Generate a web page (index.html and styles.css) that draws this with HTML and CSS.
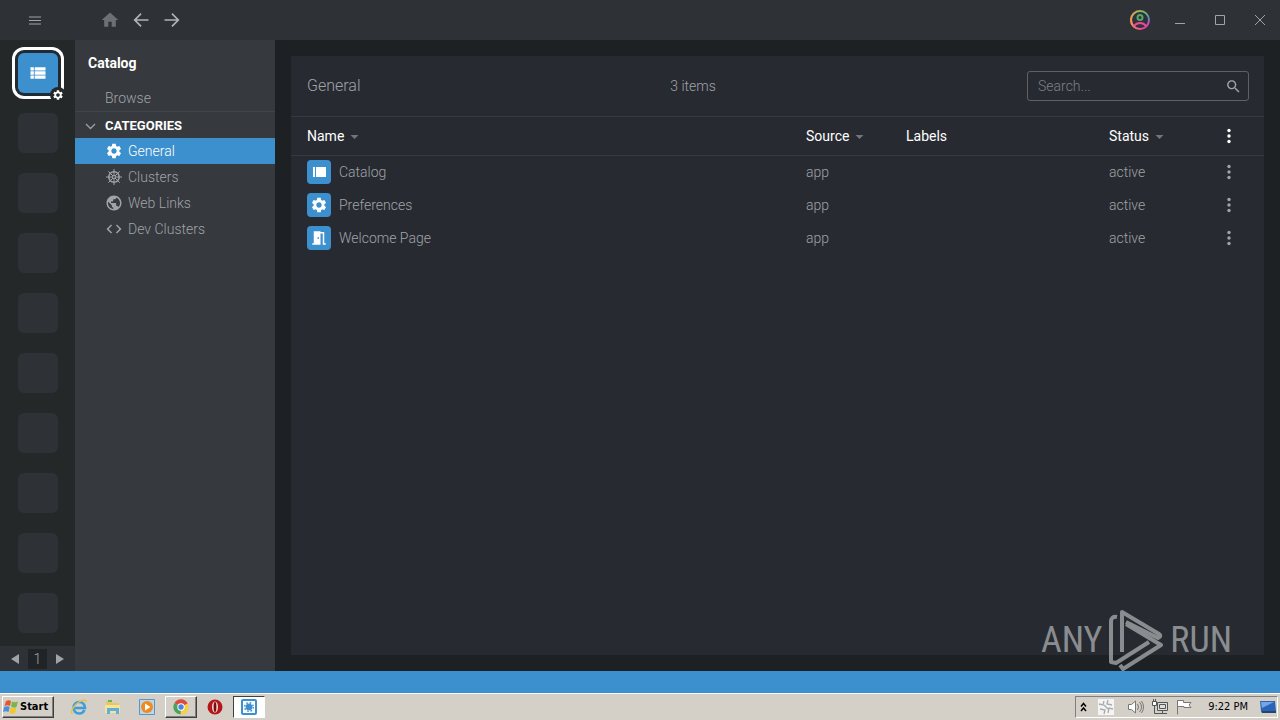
FILE: index.html
```
<!DOCTYPE html>
<html lang="en">
<head>
    <meta charset="UTF-8">
    <title>Catalog</title>
    <link rel="stylesheet" href="styles.css">
</head>

<body>
    <!-- shared icons -->
    <svg class="sprite" width="0" height="0">
        <symbol id="gear" viewBox="0 0 24 24"><path d="M19.14 12.94c.04-.3.06-.61.06-.94 0-.32-.02-.64-.07-.94l2.03-1.58c.18-.14.23-.41.12-.61l-1.92-3.32c-.12-.22-.37-.29-.59-.22l-2.39.96c-.5-.38-1.03-.7-1.62-.94l-.36-2.54c-.04-.24-.24-.41-.48-.41h-3.84c-.24 0-.43.17-.47.41l-.36 2.54c-.59.24-1.13.57-1.62.94l-2.39-.96c-.22-.08-.47 0-.59.22L2.74 8.87c-.12.21-.08.47.12.61l2.03 1.58c-.05.3-.09.63-.09.94s.02.64.07.94l-2.03 1.58c-.18.14-.23.41-.12.61l1.92 3.32c.12.22.37.29.59.22l2.39-.96c.5.38 1.03.7 1.62.94l.36 2.54c.05.24.24.41.48.41h3.84c.24 0 .44-.17.47-.41l.36-2.54c.59-.24 1.13-.56 1.62-.94l2.39.96c.22.08.47 0 .59-.22l1.92-3.32c.12-.22.07-.47-.12-.61l-2.01-1.58zM12 15.6c-1.98 0-3.6-1.62-3.6-3.6s1.62-3.6 3.6-3.6 3.6 1.62 3.6 3.6-1.62 3.6-3.6 3.6z"/></symbol>
        <symbol id="arrow" viewBox="0 0 24 24"><path d="M21 11H6.8l6-6L11.400 3.600 3 12l8.400 8.400 1.400-1.400-6-6H21z"/></symbol>
        <symbol id="dots" viewBox="0 0 6 16"><circle cx="3" cy="2.500" r="1.700"/><circle cx="3" cy="8" r="1.700"/><circle cx="3" cy="13.500" r="1.700"/></symbol>
        <symbol id="caret" viewBox="0 0 10 5"><path d="M0 0h10L5 5z"/></symbol>
    </svg>

    <header class="topbar">
        <button class="menu-btn" aria-label="Menu">
            <svg width="14" height="9" viewBox="0 0 14 9"><path d="M1 1h12M1 4.500h12M1 8h12" stroke="currentColor"/></svg>
        </button>
        <nav class="history">
            <button class="home" aria-label="Home"><svg width="20" height="20" viewBox="0 0 24 24"><path d="M10 20v-6h4v6h5v-8h3L12 3 2 12h3v8z"/></svg></button>
            <button aria-label="Back"><svg width="20" height="20"><use href="#arrow"/></svg></button>
            <button aria-label="Forward"><svg class="flip" width="20" height="20"><use href="#arrow"/></svg></button>
        </nav>
        <div class="window-controls">
            <button aria-label="Account">
                <svg width="22" height="22" viewBox="0 0 22 22" fill="none" stroke-width="2">
                    <defs>
                        <linearGradient id="rainbow" x1="0" y1="0" x2="0" y2="1">
                            <stop offset="0" stop-color="#8bb85f"/>
                            <stop offset=".3" stop-color="#4d9cae"/>
                            <stop offset=".6" stop-color="#b755c4"/>
                            <stop offset="1" stop-color="#f0409c"/>
                        </linearGradient>
                        <linearGradient id="warm" x1="0" y1="0" x2="1" y2="0">
                            <stop offset="0" stop-color="#f79a45"/>
                            <stop offset=".6" stop-color="#f79a45" stop-opacity="0"/>
                        </linearGradient>
                    </defs>
                    <circle cx="11" cy="11" r="9" stroke="url(#rainbow)"/>
                    <circle cx="11" cy="11" r="9" stroke="url(#warm)"/>
                    <circle cx="11" cy="8.500" r="2.500" stroke="#52a86b"/>
                    <path d="M5 17c1.500-2 3.500-3 6-3s4.500 1 6 3" stroke="#ee489c"/>
                </svg>
            </button>
            <button aria-label="Minimize"><svg width="12" height="12"><path d="M1 9.500h10" stroke="currentColor"/></svg></button>
            <button aria-label="Maximize"><svg width="12" height="12"><path d="M1.500 1.500h9v9h-9z" fill="none" stroke="currentColor"/></svg></button>
            <button aria-label="Close"><svg width="12" height="12"><path d="M1 1l10 10M11 1L1 11" stroke="currentColor"/></svg></button>
        </div>
    </header>

    <div class="workspace">
        <aside class="hotbar">
            <div class="slots">
                <button class="slot active" aria-label="Catalog">
                    <svg width="20" height="20" viewBox="0 0 24 24"><path d="M3 14h4v-4H3v4zm0 5h4v-4H3v4zM3 9h4V5H3v4zm5 5h13v-4H8v4zm0 5h13v-4H8v4zM8 5v4h13V5H8z"/></svg>
                    <span class="slot-badge"><svg width="12" height="12"><use href="#gear"/></svg></span>
                </button>
                <div class="slot"></div>
                <div class="slot"></div>
                <div class="slot"></div>
                <div class="slot"></div>
                <div class="slot"></div>
                <div class="slot"></div>
                <div class="slot"></div>
                <div class="slot"></div>
                <div class="slot"></div>
            </div>
            <div class="pager">
                <button aria-label="Previous"><svg width="8" height="10"><path d="M8 0v10L0 5z"/></svg></button>
                <span class="page">1</span>
                <button aria-label="Next"><svg width="8" height="10"><path d="M0 0v10l8-5z"/></svg></button>
            </div>
        </aside>

        <aside class="sidebar">
            <h1>Catalog</h1>
            <a class="browse" href="#browse">Browse</a>
            <h2>
                <svg width="11" height="7"><path d="M1 1l4.500 4.500L10 1" fill="none" stroke="#a0a0a0" stroke-width="1.300"/></svg>
                CATEGORIES
            </h2>
            <nav class="categories">
                <a class="selected" href="#general"><svg width="18" height="18"><use href="#gear"/></svg>General</a>
                <a href="#clusters">
                    <svg width="18" height="18" viewBox="0 0 18 18" fill="none" stroke="currentColor">
                        <circle cx="9" cy="9" r="5.200" stroke-width="1.500"/>
                        <circle cx="9" cy="9" r="1.500"/>
                        <path d="M9 1v6.500M9 10.500V17M1 9h6.500M10.500 9H17M3.300 3.300L8 8M10 10l4.700 4.700M14.700 3.300L10 8M8 10l-4.700 4.700"/>
                    </svg>Clusters
                </a>
                <a href="#weblinks"><svg width="18" height="18" viewBox="0 0 24 24"><path d="M12 2C6.480 2 2 6.480 2 12s4.480 10 10 10 10-4.480 10-10S17.520 2 12 2zm-1 17.930c-3.950-.49-7-3.850-7-7.930 0-.62.08-1.210.21-1.790L9 15v1c0 1.100.9 2 2 2v1.930zm6.900-2.540c-.26-.81-1-1.390-1.900-1.390h-1v-3c0-.55-.45-1-1-1H8v-2h2c.55 0 1-.45 1-1V7h2c1.100 0 2-.9 2-2v-.41c2.930 1.190 5 4.060 5 7.410 0 2.080-.8 3.970-2.100 5.390z"/></svg>Web Links</a>
                <a href="#dev"><svg width="18" height="18" viewBox="0 0 24 24"><path d="M9.400 16.600L4.800 12l4.600-4.600L8 6l-6 6 6 6 1.400-1.400zm5.200 0l4.600-4.600-4.600-4.600L16 6l6 6-6 6-1.400-1.400z"/></svg>Dev Clusters</a>
            </nav>
        </aside>

        <main class="content">
            <section class="panel">
                <div class="panel-head">
                    <h3>General</h3>
                    <span class="count">3 items</span>
                    <label class="search">
                        <input type="text" placeholder="Search..." aria-label="Search">
                        <svg width="17" height="17" viewBox="0 0 24 24"><path d="M15.500 14h-.79l-.28-.27C15.410 12.590 16 11.110 16 9.500 16 5.910 13.090 3 9.500 3S3 5.910 3 9.500 5.910 16 9.500 16c1.610 0 3.090-.59 4.230-1.570l.27.28v.79l5 4.990L20.490 19l-4.990-5zm-6 0C7.010 14 5 11.990 5 9.500S7.010 5 9.500 5 14 7.010 14 9.500 11.990 14 9.500 14z"/></svg>
                    </label>
                </div>
                <table>
                    <thead>
                        <tr>
                            <th class="col-name">Name<svg class="caret" width="9" height="4"><use href="#caret"/></svg></th>
                            <th class="col-source">Source<svg class="caret" width="9" height="4"><use href="#caret"/></svg></th>
                            <th class="col-labels">Labels</th>
                            <th class="col-status">Status<svg class="caret" width="9" height="4"><use href="#caret"/></svg></th>
                            <th class="col-menu"><button aria-label="Columns"><svg width="6" height="16"><use href="#dots"/></svg></button></th>
                        </tr>
                    </thead>
                    <tbody>
                        <tr>
                            <td class="col-name">
                                <div class="entity"><span class="tile"><svg width="16" height="16" viewBox="0 0 16 16"><path d="M2 3h2v10H2zM5 3h10v10H5z"/></svg></span>Catalog</div>
                            </td>
                            <td>app</td>
                            <td></td>
                            <td>active</td>
                            <td class="col-menu"><button aria-label="Catalog menu"><svg width="6" height="16"><use href="#dots"/></svg></button></td>
                        </tr>
                        <tr>
                            <td class="col-name">
                                <div class="entity"><span class="tile"><svg width="18" height="18"><use href="#gear"/></svg></span>Preferences</div>
                            </td>
                            <td>app</td>
                            <td></td>
                            <td>active</td>
                            <td class="col-menu"><button aria-label="Preferences menu"><svg width="6" height="16"><use href="#dots"/></svg></button></td>
                        </tr>
                        <tr>
                            <td class="col-name">
                                <div class="entity"><span class="tile"><svg width="18" height="18" viewBox="0 0 24 24"><path d="M14 6v15H3v-2h2V3h9v1h5v15h2v2h-4V6h-3zm-4 5v2h2v-2h-2z"/></svg></span>Welcome Page</div>
                            </td>
                            <td>app</td>
                            <td></td>
                            <td>active</td>
                            <td class="col-menu"><button aria-label="Welcome Page menu"><svg width="6" height="16"><use href="#dots"/></svg></button></td>
                        </tr>
                    </tbody>
                </table>
            </section>
        </main>
    </div>

    <div class="statusbar"></div>

    <footer class="taskbar">
        <button class="start">
            <svg width="16" height="16" viewBox="0 0 16 16">
                <path d="M3 2c2-1 3.500-1 5 0L7 7C5 6 3.500 6 1.500 7z" fill="#e8562a"/>
                <path d="M9 2.500c2 1 3.500 1 6 0L13.500 8c-2 1-4 .8-5.500-.5z" fill="#7ab648"/>
                <path d="M1.200 8c2-1 3.800-1 5.500 0l-1.200 5c-2-1-3.500-1-5.500 0z" fill="#4a8fd8"/>
                <path d="M7.700 8.500c2 1 3.500 1 5.500.3L12 14c-2 1-4 1-5.500-.5z" fill="#f5c52c"/>
            </svg>
            Start
        </button>
        <div class="apps">
            <button class="app" aria-label="Internet Explorer">
                <svg width="18" height="18" viewBox="0 0 18 18" fill="none">
                    <path d="M14.500 12c-1 2.300-3 3.500-5.300 3.500C5.800 15.500 3.500 13 3.500 9.800s2.500-5.800 5.700-5.800S15 6.500 15 10H5" stroke="#3c9fdc" stroke-width="2.600"/>
                    <path d="M2.500 16C-.5 14 4 7 9 4c4-2.600 8-3 7 .5" stroke="#ebc04a" stroke-width="1.400"/>
                </svg>
            </button>
            <button class="app" aria-label="Explorer">
                <svg width="18" height="18" viewBox="0 0 18 18">
                    <path d="M2 3h5l1 2h7v9H2z" fill="#e8c860"/>
                    <path d="M4 2h4v2H4z" fill="#67b35d"/>
                    <path d="M1 7h15v8H1z" fill="#f6e39a"/>
                    <path d="M3 10h12v6h-3v-3H6v3H3z" fill="#62afd8"/>
                </svg>
            </button>
            <button class="app" aria-label="Media Player">
                <svg width="18" height="18" viewBox="0 0 18 18">
                    <path d="M1.500 1.500h15v15h-15z" fill="#b9d7ef" stroke="#5c94c4"/>
                    <circle cx="9" cy="9" r="6" fill="#f18a1c"/>
                    <path d="M7 5.500v7L12.500 9z" fill="#fff"/>
                </svg>
            </button>
            <button class="app raised" aria-label="Chrome">
                <svg width="16" height="16" viewBox="0 0 16 16">
                    <path d="M8 8L1.500 4A7.500 7.500 0 0 1 14.700 4.500z" fill="#dd4b3b"/>
                    <path d="M8 8l6.700-3.500A7.500 7.500 0 0 1 7.500 15.500z" fill="#f8cf45"/>
                    <path d="M8 8l-.5 7.500A7.500 7.500 0 0 1 1.500 4z" fill="#49a459"/>
                    <circle cx="8" cy="8" r="3.700" fill="#fff"/>
                    <circle cx="8" cy="8" r="2.700" fill="#4585e8"/>
                </svg>
            </button>
            <button class="app" aria-label="Opera">
                <svg width="18" height="18" viewBox="0 0 18 18">
                    <circle cx="9" cy="9" r="7.500" fill="#b5161c"/>
                    <ellipse cx="9" cy="9" rx="3" ry="5.500" fill="#f3dede"/>
                    <ellipse cx="9" cy="9" rx="1.400" ry="5" fill="#7d0b10"/>
                </svg>
            </button>
            <button class="app pressed" aria-label="Lens">
                <svg width="16" height="16" viewBox="0 0 16 16" fill="none" stroke="#3d90ce">
                    <rect x="1" y="1" width="14" height="14" rx="1" stroke-width="2"/>
                    <circle cx="8" cy="8" r="3" fill="#3d90ce"/>
                    <circle cx="8" cy="8" r="4.300" stroke-width="1.400" stroke-dasharray="1.700 1.700"/>
                </svg>
            </button>
        </div>
        <div class="tray">
            <svg class="tray-more" width="8" height="10" fill="none" stroke="#000" stroke-width="1.500"><path d="M1 4.500l2.500-3 2.500 3M1 9l2.500-3L6 9"/></svg>
            <svg class="tray-lens" width="16" height="16" viewBox="0 0 16 16">
                <rect width="16" height="16" fill="#f4f4f4"/>
                <path d="M1 5l4 1 1-4M10 1l-1 4 5 1M15 10l-4-1-1 5M6 15l1-4-5-1M6 6l4 4" fill="none" stroke="#aaa" stroke-width="1.300"/>
            </svg>
            <svg width="16" height="16" viewBox="0 0 16 16" fill="none" stroke="#777">
                <path d="M.5 5.500h3L7.500 2v12l-4-3.500h-3z" fill="#fff"/>
                <path d="M9.500 5q2 3 0 6M11.500 3q4 5 0 10M13.500 2q4 6 0 12"/>
            </svg>
            <svg width="16" height="16" viewBox="0 0 16 16" fill="none" stroke="#555">
                <path d="M5.500 3.500h10v8h-10z" fill="#ddd"/>
                <path d="M7.500 5.500h6v4h-6z"/>
                <path d="M10.500 12v2.500M6 14.500h9"/>
                <path d="M.5 2.500h4v4h-4zM1.500 0v2M3.500 0v2" fill="#fff"/>
                <path d="M2.500 7v7.500H6"/>
            </svg>
            <svg width="16" height="16" viewBox="0 0 16 16" fill="#fff" stroke="#777">
                <path d="M1.500 1v14.500"/>
                <path d="M1.500 1.500h6v2h7.500l-2 2.500 2 2.500H8v-1H1.500z"/>
            </svg>
            <time>9:22 PM</time>
            <svg width="16" height="14" viewBox="0 0 16 14">
                <path d="M0 1h15l1 10H1z" fill="#2a63b8"/>
                <path d="M1 2h13L2 8z" fill="#73a7e3"/>
                <path d="M1 11h15v2H2z" fill="#284468"/>
            </svg>
        </div>
    </footer>

    <div class="watermark">
        <span>ANY</span>
        <svg width="56" height="62" viewBox="0 0 56 62" fill="none" stroke="currentColor" stroke-width="4" stroke-linejoin="round">
            <path d="M9 8Q3 7 3 13v40l5 1 33-21"/>
            <path d="M14 43V3l37 22q3 2-1 4L18 13"/>
            <path d="M18 15l35 21-38 24-3-4"/>
        </svg>
        <span>RUN</span>
    </div>
</body>

</html>
```

FILE: styles.css
```
* {
    box-sizing: border-box;
}

body {
    margin: 0;
    height: 100vh;
    display: flex;
    flex-direction: column;
    overflow: hidden;
    font-family: Roboto, sans-serif;
    font-size: 14px;
    font-weight: 300;
    line-height: 20px;
    color: #a0a3a8;
    background-color: #1e2124;
}

.sprite {
    position: absolute;
}

svg {
    display: block;
    flex-shrink: 0;
}

svg:not([fill]) {
    fill: currentColor;
}

button {
    padding: 0;
    border: none;
    background: none;
    color: inherit;
    cursor: pointer;
}

a {
    color: inherit;
    text-decoration: none;
}

h1, h2, h3 {
    margin: 0;
    font-size: 14px;
}

/* top bar */
.topbar {
    display: flex;
    align-items: center;
    flex: none;
    height: 40px;
    padding: 0 14px 0 28px;
    background-color: #2e3136;
}

.history {
    display: flex;
    gap: 11px;
    margin-left: 58px;
    color: #b0b2b6;
}

.home {
    color: #6c6f75;
}

.flip {
    transform: scaleX(-1);
}

.window-controls {
    display: flex;
    align-items: center;
    gap: 28px;
    margin-left: auto;
}

.window-controls button:first-child {
    margin-right: -5px;
}

/* main area */
.workspace {
    display: flex;
    flex: 1;
    min-height: 0;
}

.hotbar {
    display: flex;
    flex-direction: column;
    justify-content: space-between;
    flex: none;
    width: 75px;
    background-color: #252829;
}

.slots {
    display: flex;
    flex-direction: column;
    align-items: center;
    gap: 20px;
    padding-top: 13px;
}

.slot {
    width: 40px;
    height: 40px;
    border-radius: 6px;
    background-color: #2e3136;
}

.slot.active {
    display: flex;
    align-items: center;
    justify-content: center;
    position: relative;
    color: #fff;
    background-color: #3d90ce;
    box-shadow: 0 0 0 3px #222a33, 0 0 0 6px #fff;
}

.slot-badge {
    position: absolute;
    right: -8px;
    bottom: -10px;
    padding: 2px;
    border-radius: 8px;
    background-color: #252829;
}

.pager {
    display: flex;
    align-items: center;
    justify-content: center;
    gap: 9px;
    height: 25px;
    color: #a0a3a8;
    background-color: #2e3136;
}

.page {
    width: 19px;
    text-align: center;
    background-color: #212427;
}

.sidebar {
    flex: none;
    width: 200px;
    background-color: #36393e;
}

.sidebar h1 {
    padding: 13px 13px 11px;
    font-weight: 700;
    color: #fff;
}

.browse {
    display: block;
    padding: 4px 30px 3px;
    border-bottom: 1px solid #414448;
}

.sidebar h2 {
    display: flex;
    align-items: center;
    gap: 9px;
    padding: 4px 10px 2px;
    font-size: 13px;
    font-weight: 700;
    color: #fff;
}

.categories a {
    display: flex;
    align-items: center;
    gap: 5px;
    height: 26px;
    padding-left: 30px;
}

.categories .selected {
    color: #fff;
    background-color: #3d90ce;
}

.content {
    display: flex;
    flex: 1;
    padding: 16px;
}

.panel {
    flex: 1;
    background-color: #272b31;
}

.panel-head {
    display: grid;
    grid-template-columns: 1fr auto 1fr;
    align-items: center;
    height: 61px;
    padding: 0 15px 0 16px;
    border-bottom: 1px solid #353a40;
}

.panel-head h3 {
    font-size: 16px;
    font-weight: 300;
}

.count {
    padding-right: 170px;
}

.search {
    display: flex;
    align-items: center;
    justify-self: end;
    width: 222px;
    height: 30px;
    padding: 0 6px 0 10px;
    border: 1px solid #5d6166;
    border-radius: 3px;
}

.search input {
    flex: 1;
    min-width: 0;
    padding: 0;
    border: none;
    outline: none;
    background: none;
    font: inherit;
    color: inherit;
}

.search input::placeholder {
    color: #7c8087;
}

table {
    width: 100%;
    table-layout: fixed;
    border-collapse: collapse;
}

th, td {
    height: 33px;
    padding: 0;
    text-align: left;
}

th {
    height: 38px;
    font-weight: 400;
    color: #fff;
    border-bottom: 1px solid #353a40;
}

.col-name {
    padding-left: 16px;
}

.col-source {
    width: 100px;
}

.col-labels {
    width: 203px;
}

.col-status {
    width: 103px;
}

th.col-menu {
    width: 52px;
}

.col-menu button {
    display: block;
    margin-left: 14px;
}

.caret {
    display: inline-block;
    margin-left: 6px;
    vertical-align: middle;
    color: #72767b;
}

.entity {
    display: flex;
    align-items: center;
    gap: 8px;
}

.tile {
    display: flex;
    align-items: center;
    justify-content: center;
    width: 24px;
    height: 24px;
    border-radius: 4px;
    color: #fff;
    background-color: #3d90ce;
}

.statusbar {
    flex: none;
    height: 22px;
    background-color: #3d90ce;
}

/* desktop taskbar */
.taskbar {
    display: flex;
    align-items: center;
    flex: none;
    height: 27px;
    padding: 1px 2px 2px;
    border-top: 1px solid #fff;
    background-color: #d4d0c8;
    font-family: "DejaVu Sans Condensed", sans-serif;
    font-size: 11px;
    font-weight: 400;
    color: #000;
}

.start, .raised {
    border: 1px solid;
    border-color: #fff #404040 #404040 #fff;
    box-shadow: inset -1px -1px #808080;
}

.start {
    display: flex;
    align-items: center;
    gap: 1px;
    width: 52px;
    height: 22px;
    font-family: "DejaVu Sans Condensed", sans-serif;
    font-size: 11px;
    font-weight: bold;
}

.apps {
    display: flex;
    gap: 2px;
    margin-left: 9px;
}

.app {
    display: flex;
    align-items: center;
    justify-content: center;
    width: 32px;
    height: 22px;
}

.pressed {
    border: 1px solid;
    border-color: #404040 #fff #fff #404040;
    background-color: #fff;
}

.tray {
    display: flex;
    align-items: center;
    gap: 8px;
    height: 22px;
    margin-left: auto;
    padding: 0 1px 0 4px;
    border: 1px solid;
    border-color: #808080 #fff #fff #808080;
}

.tray-more {
    margin-right: 2px;
}

.tray-lens {
    margin-right: 6px;
}

.tray time {
    margin: 0 4px 0 8px;
}

.watermark {
    position: absolute;
    right: 48px;
    bottom: 49px;
    display: flex;
    align-items: center;
    gap: 6px;
    font-family: "Liberation Sans Narrow", "Roboto Condensed", Roboto, sans-serif;
    font-size: 36px;
    font-weight: 400;
    line-height: 40px;
    color: #b4b7b9;
    opacity: 0.7;
    pointer-events: none;
}
```
